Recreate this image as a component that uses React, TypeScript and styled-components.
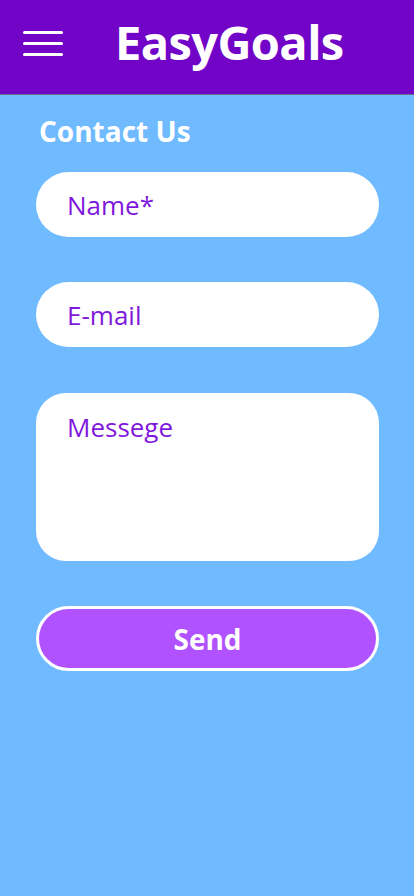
import React from "react";
import styled, { createGlobalStyle } from "styled-components";

const Global = createGlobalStyle`
  html, body { margin: 0; padding: 0; }
  body { background: #70baff; font-family: "Open Sans", "Noto Sans", sans-serif; }
  * { box-sizing: border-box; }
`;

const Page = styled.div`
  min-height: 896px;
  background: #70baff;
  display: flex;
  flex-direction: column;
`;

const Header = styled.header`
  height: 95px;
  background: #7204c7;
  border-bottom: 1px solid #6b6b8a;
  display: flex;
  align-items: center;
  padding: 0 0 0 23px;
`;

const Burger = styled.button`
  width: 40px;
  height: 25px;
  padding: 0;
  border: none;
  background: transparent;
  display: flex;
  flex-direction: column;
  justify-content: space-between;
  margin-top: -8px;
`;

const BurgerLine = styled.span`
  display: block;
  height: 3px;
  width: 40px;
  border-radius: 2px;
  background: #ffffff;
`;

const Title = styled.h1`
  margin: -10px 0 0 52px;
  color: #ffffff;
  font-weight: 700;
  font-size: 47px;
  letter-spacing: -0.6px;
`;

const Main = styled.main`
  padding: 12px 35px 0 36px;
  display: flex;
  flex-direction: column;
`;

const Heading = styled.h2`
  margin: 0 0 0 3px;
  color: #ffffff;
  font-weight: 700;
  font-size: 28px;
  line-height: 48px;
`;

const Form = styled.form`
  margin-top: 17px;
  display: flex;
  flex-direction: column;
  gap: 45px;
`;

const Field = styled.div<{ $tall?: boolean }>`
  height: ${(p) => (p.$tall ? "168px" : "65px")};
  margin-top: ${(p) => (p.$tall ? "1px" : "0")};
  border-radius: ${(p) => (p.$tall ? "30px" : "33px")};
  background: #ffffff;
  padding: ${(p) => (p.$tall ? "16px 31px" : "0 31px")};
  display: flex;
  align-items: ${(p) => (p.$tall ? "flex-start" : "center")};
`;

const Placeholder = styled.span`
  color: #7f18dc;
  font-size: 26px;
  font-weight: 500;
  line-height: 36px;
`;

const SendButton = styled.button`
  height: 65px;
  border-radius: 33px;
  background: #b052ff;
  border: 3px solid #ffffff;
  color: #ffffff;
  font-family: inherit;
  font-weight: 700;
  font-size: 28px;
  display: flex;
  align-items: center;
  justify-content: center;
`;

export default function App() {
  return (
    <Page>
      <Global />
      <Header>
        <Burger aria-label="menu">
          <BurgerLine />
          <BurgerLine />
          <BurgerLine />
        </Burger>
        <Title>EasyGoals</Title>
      </Header>
      <Main>
        <Heading>Contact Us</Heading>
        <Form>
          <Field>
            <Placeholder>Name*</Placeholder>
          </Field>
          <Field>
            <Placeholder>E-mail</Placeholder>
          </Field>
          <Field $tall>
            <Placeholder>Messege</Placeholder>
          </Field>
          <SendButton type="button">Send</SendButton>
        </Form>
      </Main>
    </Page>
  );
}
